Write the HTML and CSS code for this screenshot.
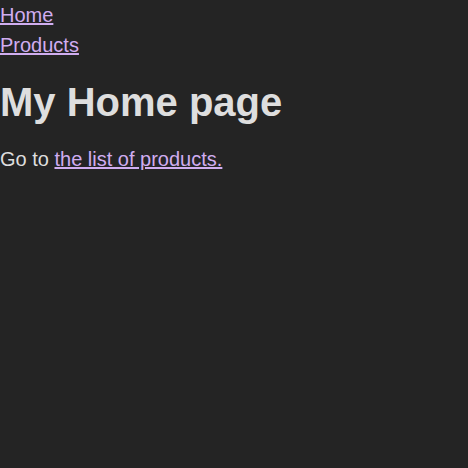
FILE: index.html
```html
<!DOCTYPE html>
<html lang="en">
<head>
<meta charset="utf-8">
<title>My Home page</title>
<link rel="stylesheet" href="styles.css">
</head>
<body>
<nav class="nav">
  <div><a href="#" class="link">Home</a></div>
  <div><a href="#" class="link">Products</a></div>
</nav>
<main>
  <h1 class="title">My Home page</h1>
  <p class="text">Go to <a href="#" class="link">the list of products.</a></p>
</main>
</body>
</html>
```
FILE: styles.css
```css
html, body {
  margin: 0;
  background: #242424;
}
body {
  font-family: "Liberation Sans", Arial, sans-serif;
  font-size: 20px;
  line-height: 1.5;
  color: #dedede;
}
.link {
  color: #d0adf0;
  text-decoration: underline;
}
.title {
  font-size: 40px;
  line-height: 1.1;
  font-weight: bold;
  margin: 20px 0;
}
.text {
  margin: 0;
}
```
